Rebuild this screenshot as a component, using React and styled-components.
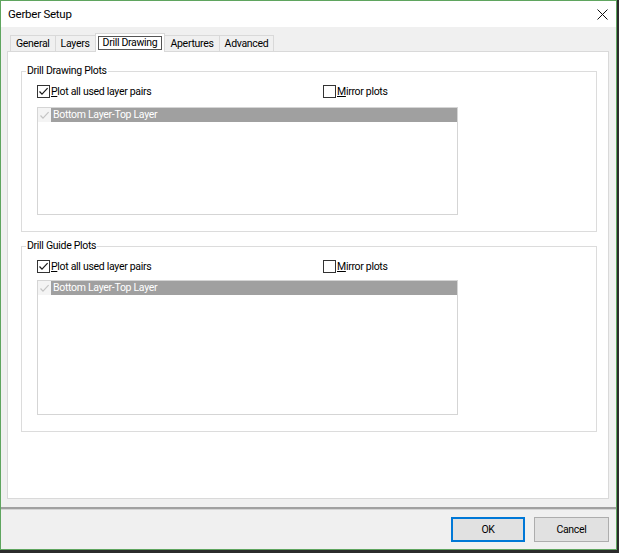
import React from "react";
import styled, { createGlobalStyle } from "styled-components";

const GlobalStyle = createGlobalStyle`
  html, body {
    margin: 0;
    padding: 0;
    background: #2b2b2b;
  }
  body {
    width: 619px;
    height: 553px;
    overflow: hidden;
    font-family: Roboto, "Liberation Sans", sans-serif;
    font-size: 10.5px;
    letter-spacing: -0.3px;
    color: #000;
  }
`;

const tabs = ["General", "Layers", "Drill Drawing", "Apertures", "Advanced"];

const groups = [
  { title: "Drill Drawing Plots", listHeight: 108, gap: 9 },
  { title: "Drill Guide Plots", listHeight: 135, gap: 7 },
];

const CheckMark = ({ color }) => (
  <svg width="11" height="11" viewBox="0 0 11 11">
    <path d="M1.5 5.5 L4 8.2 L9.6 2.2" fill="none" stroke={color} strokeWidth="1.2" />
  </svg>
);

class App extends React.Component {
  render() {
    return (
      <>
        <GlobalStyle />
        <Window>
          <TitleBar>
            <Title>Gerber Setup</Title>
            <svg width="11" height="11" viewBox="0 0 11 11">
              <path d="M0.5 0.5 L10.5 10.5 M10.5 0.5 L0.5 10.5" stroke="#111" strokeWidth="1" />
            </svg>
          </TitleBar>
          <Body>
            <TabStrip>
              {tabs.map((t) => (
                <Tab key={t} active={t === "Drill Drawing"}>
                  {t === "Drill Drawing" ? <Focus>{t}</Focus> : t}
                </Tab>
              ))}
            </TabStrip>
            <Panel>
              {groups.map((g) => (
                <Group key={g.title}>
                  <Legend>{g.title}</Legend>
                  <OptionRow>
                    <CheckLabel>
                      <Box>
                        <CheckMark color="#1a1a1a" />
                      </Box>
                      <span>
                        <u>P</u>lot all used layer pairs
                      </span>
                    </CheckLabel>
                    <CheckLabel>
                      <Box />
                      <span>
                        <u>M</u>irror plots
                      </span>
                    </CheckLabel>
                  </OptionRow>
                  <ListBox height={g.listHeight} gap={g.gap}>
                    <ListRow>
                      <RowCheck>
                        <CheckMark color="#c4c4c4" />
                      </RowCheck>
                      <RowText>Bottom Layer-Top Layer</RowText>
                    </ListRow>
                  </ListBox>
                </Group>
              ))}
            </Panel>
          </Body>
          <Separator />
          <Footer>
            <Button primary>OK</Button>
            <Button>Cancel</Button>
          </Footer>
        </Window>
      </>
    );
  }
}

export default App;

const Window = styled.div`
  width: 617px;
  height: 550px;
  box-sizing: border-box;
  border: 1px solid #5fa55f;
  background: #f0f0f0;
  display: flex;
  flex-direction: column;
`;

const TitleBar = styled.div`
  box-sizing: border-box;
  height: 26px;
  flex: none;
  background: #fff;
  display: flex;
  align-items: center;
  justify-content: space-between;
  padding: 0 8px 0 7px;
`;

const Title = styled.span`
  font-size: 11.5px;
  letter-spacing: -0.25px;
`;

const Body = styled.div`
  box-sizing: border-box;
  height: 480px;
  flex: none;
  display: flex;
  flex-direction: column;
  padding: 6px 7px 8px 6px;
`;

const TabStrip = styled.div`
  display: flex;
  align-items: flex-end;
  height: 18px;
  flex: none;
  padding-left: 4px;
  position: relative;
  z-index: 1;
`;

const Tab = styled.div`
  box-sizing: border-box;
  height: ${(p) => (p.active ? "19px" : "16px")};
  margin-bottom: ${(p) => (p.active ? "-1px" : "0")};
  padding: 0 ${(p) => (p.active ? "2px" : "5px")};
  display: flex;
  align-items: center;
  background: ${(p) => (p.active ? "#fff" : "#f0f0f0")};
  border: 1px solid #d9d9d9;
  border-bottom: none;
  margin-left: -1px;
  white-space: nowrap;
`;

const Focus = styled.span`
  border: 1px solid #555;
  padding: 0 4px;
  line-height: 12px;
`;

const Panel = styled.div`
  flex: 1;
  background: #fff;
  border: 1px solid #d9d9d9;
  padding: 12px 11px 0 13px;
  display: flex;
  flex-direction: column;
  gap: 7px;
`;

const Group = styled.fieldset`
  margin: 0;
  border: 1px solid #dcdcdc;
  padding: 7px 0 16px 15px;
`;

const Legend = styled.legend`
  line-height: 14px;
  padding: 0 1px;
  margin-left: -11px;
`;

const OptionRow = styled.div`
  display: grid;
  grid-template-columns: 286px auto;
  align-items: center;
  height: 13px;
`;

const CheckLabel = styled.label`
  display: flex;
  align-items: center;
  gap: 1px;
  white-space: nowrap;
`;

const Box = styled.span`
  box-sizing: border-box;
  width: 13px;
  height: 13px;
  border: 1px solid #333;
  background: #fff;
  display: flex;
  align-items: center;
  justify-content: center;
`;

const ListBox = styled.div`
  box-sizing: border-box;
  width: 421px;
  height: ${(p) => p.height}px;
  margin-top: ${(p) => p.gap}px;
  border: 1px solid #d5d5d5;
  background: #fff;
`;

const ListRow = styled.div`
  display: flex;
  height: 14px;
`;

const RowCheck = styled.span`
  width: 13px;
  display: flex;
  align-items: center;
  justify-content: center;
  background: #f4f4f4;
`;

const RowText = styled.span`
  flex: 1;
  background: #a0a0a0;
  color: #fff;
  padding-left: 2px;
  line-height: 14px;
`;

const Separator = styled.div`
  height: 2px;
  flex: none;
  background: #a0a0a0;
  border-bottom: 1px solid #d4d4d4;
`;

const Footer = styled.div`
  box-sizing: border-box;
  height: 39px;
  flex: none;
  display: flex;
  justify-content: flex-end;
  align-items: flex-start;
  gap: 9px;
  padding: 7px 7px 0 0;
`;

const Button = styled.button`
  box-sizing: border-box;
  width: ${(p) => (p.primary ? "74px" : "75px")};
  height: 25px;
  background: #e1e1e1;
  border: 1px solid ${(p) => (p.primary ? "#0078d7" : "#adadad")};
  box-shadow: ${(p) => (p.primary ? "inset 0 0 0 1px #0078d7" : "none")};
  font-family: inherit;
  font-size: 10.5px;
  letter-spacing: -0.3px;
  color: #000;
  padding: 0;
`;
